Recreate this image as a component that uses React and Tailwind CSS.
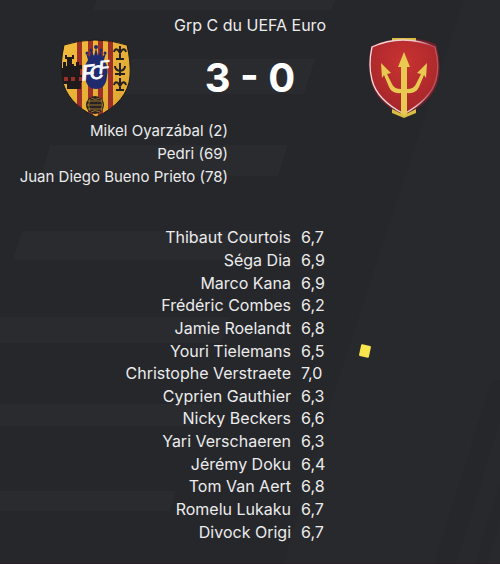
const scorers = ['Mikel Oyarzábal (2)', 'Pedri (69)', 'Juan Diego Bueno Prieto (78)'];

const players = [
  { name: 'Thibaut Courtois', rating: '6,7' },
  { name: 'Séga Dia', rating: '6,9' },
  { name: 'Marco Kana', rating: '6,9' },
  { name: 'Frédéric Combes', rating: '6,2' },
  { name: 'Jamie Roelandt', rating: '6,8' },
  { name: 'Youri Tielemans', rating: '6,5', booked: true },
  { name: 'Christophe Verstraete', rating: '7,0' },
  { name: 'Cyprien Gauthier', rating: '6,3' },
  { name: 'Nicky Beckers', rating: '6,6' },
  { name: 'Yari Verschaeren', rating: '6,3' },
  { name: 'Jérémy Doku', rating: '6,4' },
  { name: 'Tom Van Aert', rating: '6,8' },
  { name: 'Romelu Lukaku', rating: '6,7' },
  { name: 'Divock Origi', rating: '6,7' },
];

function Backdrop() {
  return (
    <svg
      className="absolute inset-0 h-full w-full"
      viewBox="0 0 500 564"
      preserveAspectRatio="xMidYMin slice"
      aria-hidden="true"
    >
      <path d="M463 0H500V564H283L338 380L397 200Z" fill="#28292c" />
      <path d="M492 380H500V420L456 564H434Z" fill="#26272a" />
      <path d="M500 484V520L487 564H475Z" fill="#26272a" />
      <g fill="#2a2b2f">
        <path d="M97 0H335L331 10H93Z" />
        <path d="M76 59H315L304 94H65Z" />
        <path d="M50 145H288L278 176H41Z" />
        <path d="M22 231H257L248 260H13Z" />
        <path d="M0 317H230L221 343H0Z" />
        <path d="M0 404H203L196 426H0Z" />
        <path d="M0 491H176L170 511H0Z" />
      </g>
    </svg>
  );
}

function HomeCrest() {
  return (
    <svg className="h-20 w-18" viewBox="0 0 72 80" role="img" aria-label="FCF">
      <defs>
        <clipPath id="home-shield">
          <path d="M4 6Q19 1 35 1Q52 1 67 6Q71 24 70 37Q68 63 36 78Q6 64 2 39Q0 24 4 6Z" />
        </clipPath>
        <linearGradient id="gold" x1="0" y1="0" x2="1" y2="1">
          <stop offset="0" stopColor="#f4bd3c" />
          <stop offset="1" stopColor="#dba431" />
        </linearGradient>
      </defs>
      <g clipPath="url(#home-shield)">
        <path d="M0 0H72V80H0Z" fill="url(#gold)" />
        <path d="M17 0h5v80h-5zM28 0h5v80h-5zM38 0h5v80h-5zM48 0h5v80h-5z" fill="#9c3029" />
        <path
          d="M5 16h2v2h5v-2h2v4h-2v5h2v2h2v-4h3v3h3v4h-2v6h2v7h-1v7H7v-5H0V29h3v-6h3v4h1v-7H5Z"
          fill="#1f1a1c"
        />
        <path d="M4 38h4v4H4zM11 38h4v4h-4zM19 38h3v4h-3z" fill="#9c3029" />
        <g fill="#1f2b6c">
          <circle cx="27" cy="14" r="1.5" />
          <circle cx="31" cy="11" r="1.5" />
          <circle cx="36" cy="8" r="2" />
          <circle cx="41" cy="11" r="1.5" />
          <circle cx="45" cy="14" r="1.5" />
          <path d="M26 14l4 4 1-7 3 6 2-8 2 8 3-6 1 7 4-4-2 7q5 7 3 16q-1 13-11 13q-10 0-11-13q-2-9 3-16Z" />
        </g>
        <g fill="none" stroke="#242020" strokeWidth="2">
          <path d="M60 7v13M56 20h8M54 13q1-4 4-2l2 3 2-3q3-2 4 2M60 24v13M55 35h10M60 32q-5-1-5-5M60 32q5-1 5-5M60 39v13M56 51h8M54 46q1-4 4-2l2 3 2-3q3-2 4 2" />
        </g>
        <circle cx="35" cy="66" r="9" fill="#282322" />
        <path
          d="M28 62h14M27 66h16M28 70h14M31 59q4 3 9 0M31 73q4-3 9 0M30 60q-3 6 0 12M41 60q3 6 0 12"
          fill="none"
          stroke="#98732e"
          strokeWidth="1"
        />
      </g>
      <g className="font-['Liberation_Sans',sans-serif] font-bold italic" fill="#f5f7fc">
        <text x="22" y="42" fontSize="23" transform="rotate(-6 22 42)">
          F
        </text>
        <text x="30" y="41" fontSize="20" transform="rotate(-6 30 41)">
          C
        </text>
        <text x="39" y="35" fontSize="19" transform="rotate(-6 39 35)">
          F
        </text>
      </g>
      <path
        d="M4 6Q19 1 35 1Q52 1 67 6Q71 24 70 37Q68 63 36 78Q6 64 2 39Q0 24 4 6Z"
        fill="none"
        stroke="#1b1a1c"
        strokeWidth="1"
      />
    </svg>
  );
}

function AwayCrest() {
  return (
    <svg className="h-20 w-18" viewBox="0 0 72 80" role="img" aria-label="Trident">
      <defs>
        <radialGradient id="red" cx="0.5" cy="0.3" r="0.7">
          <stop offset="0" stopColor="#c93332" />
          <stop offset="1" stopColor="#a4252a" />
        </radialGradient>
        <linearGradient id="rim">
          <stop offset="0" stopColor="#f1dedf" />
          <stop offset="0.65" stopColor="#eec9cc" />
          <stop offset="0.9" stopColor="#b8545f" />
        </linearGradient>
      </defs>
      <path
        d="M3 8Q18 1 35 1Q54 0 68 6Q74 27 70 43Q65 64 36 78Q8 65 3 44Q-1 27 3 8Z"
        fill="#6b202a"
      />
      <path d="M24 0H48V5H24Z" fill="#d9bd43" />
      <path
        d="M4 9Q19 2 35 2Q52 2 67 9Q72 27 68 42Q63 61 36 76Q9 62 4 42Q0 27 4 9Z"
        fill="url(#red)"
        stroke="url(#rim)"
        strokeWidth="1.3"
      />
      <path d="M24 71L36 77L48 71V75L36 80L24 75Z" fill="#d9bd43" />
      <path
        d="M36 14L42 29H39V51Q46 51 48 46L53 36L49 35L59 25L58 40L56 37L51 49Q48 56 39 55V76L36 78L33 76V55Q24 56 21 49L16 37L14 40L13 25L23 35L19 36L24 46Q26 51 33 51V29H30Z"
        fill="#e8ca50"
      />
    </svg>
  );
}

export default function App() {
  return (
    <main className="relative min-h-screen overflow-hidden border-b border-[#2a2029] bg-[#26272a] font-['Inter','Liberation_Sans',sans-serif] text-base text-[#ececed]">
      <Backdrop />
      <div className="relative">
        <h1 className="pt-[13px] text-center leading-6">Grp C du UEFA Euro</h1>

        <header className="grid grid-cols-[192px_1fr_192px] items-start">
          <div className="flex justify-center pt-0.5">
            <HomeCrest />
          </div>
          <p className="text-center text-[40px] leading-[82px] font-bold text-white">3 - 0</p>
          <div className="flex justify-center pt-px">
            <AwayCrest />
          </div>
        </header>

        <ul className="w-[228px] text-right text-[15px] leading-[23px] whitespace-nowrap">
          {scorers.map((scorer) => (
            <li key={scorer}>{scorer}</li>
          ))}
        </ul>

        <table className="mt-[38px] h-[317px] w-full">
          <tbody>
            {players.map(({ name, rating, booked }) => (
              <tr key={name} className="leading-[22px]">
                <th scope="row" className="w-[291px] p-0 text-right font-normal">
                  {name}
                </th>
                <td className="w-[34px] p-0 pl-2.5">{rating}</td>
                <td className="p-0 pl-[35px]">
                  {booked && (
                    <span
                      role="img"
                      aria-label="Carton jaune"
                      className="block h-3 w-2.5 rotate-12 rounded-[1px] bg-[#fbe54d]"
                    />
                  )}
                </td>
              </tr>
            ))}
          </tbody>
        </table>
      </div>
    </main>
  );
}
